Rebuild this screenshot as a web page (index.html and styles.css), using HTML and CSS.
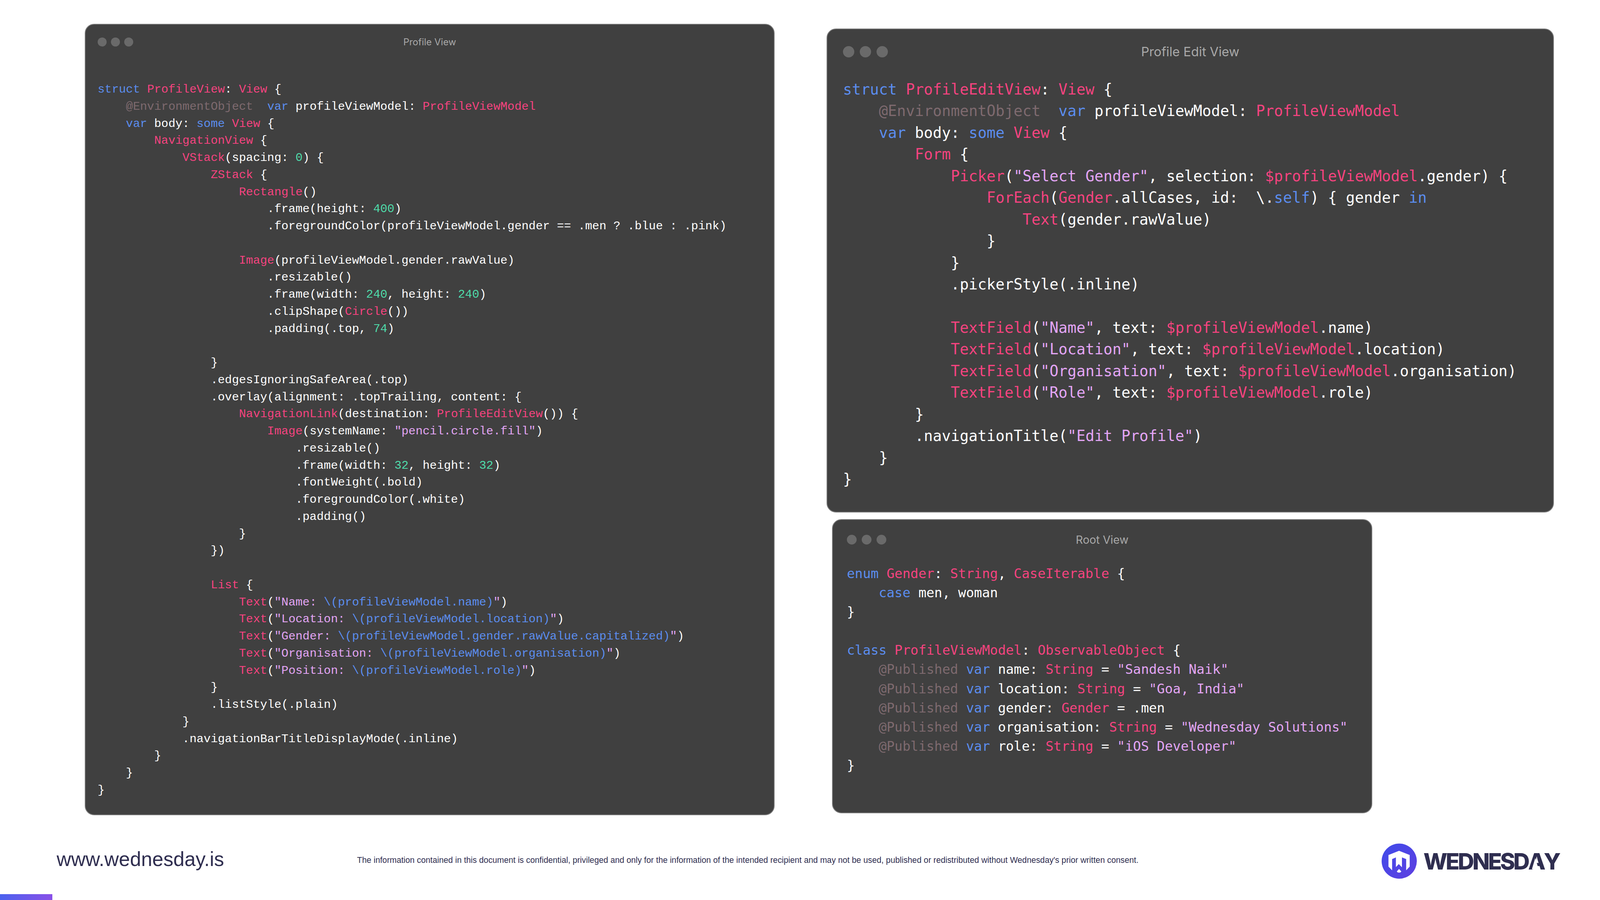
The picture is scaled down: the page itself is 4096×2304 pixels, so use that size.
FILE: index.html
```html
<!DOCTYPE html>
<html lang="en">
<head>
<meta charset="utf-8">
<title>SwiftUI profile code</title>
<link rel="stylesheet" href="styles.css">
</head>
<body>
<div class="slide">
  <main class="main">
    <section class="win win-profile">
      <header class="bar">
        <div class="dots"><i></i><i></i><i></i></div>
        <div class="title">Profile View</div>
      </header>
      <div class="code">
        <div class="ln"><span class="k">struct</span> <span class="t">ProfileView</span>: <span class="t">View</span> {</div>
        <div class="ln">    <span class="a">@EnvironmentObject</span>  <span class="k">var</span> profileViewModel: <span class="t">ProfileViewModel</span></div>
        <div class="ln">    <span class="k">var</span> body: <span class="k">some</span> <span class="t">View</span> {</div>
        <div class="ln">        <span class="t">NavigationView</span> {</div>
        <div class="ln">            <span class="t">VStack</span>(spacing: <span class="n">0</span>) {</div>
        <div class="ln">                <span class="t">ZStack</span> {</div>
        <div class="ln">                    <span class="t">Rectangle</span>()</div>
        <div class="ln">                        .frame(height: <span class="n">400</span>)</div>
        <div class="ln">                        .foregroundColor(profileViewModel.gender == .men ? .blue : .pink)</div>
        <div class="ln"> </div>
        <div class="ln">                    <span class="t">Image</span>(profileViewModel.gender.rawValue)</div>
        <div class="ln">                        .resizable()</div>
        <div class="ln">                        .frame(width: <span class="n">240</span>, height: <span class="n">240</span>)</div>
        <div class="ln">                        .clipShape(<span class="t">Circle</span>())</div>
        <div class="ln">                        .padding(.top, <span class="n">74</span>)</div>
        <div class="ln"> </div>
        <div class="ln">                }</div>
        <div class="ln">                .edgesIgnoringSafeArea(.top)</div>
        <div class="ln">                .overlay(alignment: .topTrailing, content: {</div>
        <div class="ln">                    <span class="t">NavigationLink</span>(destination: <span class="t">ProfileEditView</span>()) {</div>
        <div class="ln">                        <span class="t">Image</span>(systemName: <span class="s">"pencil.circle.fill"</span>)</div>
        <div class="ln">                            .resizable()</div>
        <div class="ln">                            .frame(width: <span class="n">32</span>, height: <span class="n">32</span>)</div>
        <div class="ln">                            .fontWeight(.bold)</div>
        <div class="ln">                            .foregroundColor(.white)</div>
        <div class="ln">                            .padding()</div>
        <div class="ln">                    }</div>
        <div class="ln">                })</div>
        <div class="ln"> </div>
        <div class="ln">                <span class="t">List</span> {</div>
        <div class="ln">                    <span class="t">Text</span>(<span class="s">"Name: </span><span class="k">\(profileViewModel.name)</span><span class="s">"</span>)</div>
        <div class="ln">                    <span class="t">Text</span>(<span class="s">"Location: </span><span class="k">\(profileViewModel.location)</span><span class="s">"</span>)</div>
        <div class="ln">                    <span class="t">Text</span>(<span class="s">"Gender: </span><span class="k">\(profileViewModel.gender.rawValue.capitalized)</span><span class="s">"</span>)</div>
        <div class="ln">                    <span class="t">Text</span>(<span class="s">"Organisation: </span><span class="k">\(profileViewModel.organisation)</span><span class="s">"</span>)</div>
        <div class="ln">                    <span class="t">Text</span>(<span class="s">"Position: </span><span class="k">\(profileViewModel.role)</span><span class="s">"</span>)</div>
        <div class="ln">                }</div>
        <div class="ln">                .listStyle(.plain)</div>
        <div class="ln">            }</div>
        <div class="ln">            .navigationBarTitleDisplayMode(.inline)</div>
        <div class="ln">        }</div>
        <div class="ln">    }</div>
        <div class="ln">}</div>
      </div>
    </section>
    <div class="side">
      <section class="win win-edit">
        <header class="bar">
          <div class="dots"><i></i><i></i><i></i></div>
          <div class="title">Profile Edit View</div>
        </header>
        <div class="code">
          <div class="ln"><span class="k">struct</span> <span class="t">ProfileEditView</span>: <span class="t">View</span> {</div>
          <div class="ln">    <span class="a">@EnvironmentObject</span>  <span class="k">var</span> profileViewModel: <span class="t">ProfileViewModel</span></div>
          <div class="ln">    <span class="k">var</span> body: <span class="k">some</span> <span class="t">View</span> {</div>
          <div class="ln">        <span class="t">Form</span> {</div>
          <div class="ln">            <span class="t">Picker</span>(<span class="s">"Select Gender"</span>, selection: <span class="t">$profileViewModel</span>.gender) {</div>
          <div class="ln">                <span class="t">ForEach</span>(<span class="t">Gender</span>.allCases, id:  \.<span class="k">self</span>) { gender <span class="k">in</span></div>
          <div class="ln">                    <span class="t">Text</span>(gender.rawValue)</div>
          <div class="ln">                }</div>
          <div class="ln">            }</div>
          <div class="ln">            .pickerStyle(.inline)</div>
          <div class="ln"> </div>
          <div class="ln">            <span class="t">TextField</span>(<span class="s">"Name"</span>, text: <span class="t">$profileViewModel</span>.name)</div>
          <div class="ln">            <span class="t">TextField</span>(<span class="s">"Location"</span>, text: <span class="t">$profileViewModel</span>.location)</div>
          <div class="ln">            <span class="t">TextField</span>(<span class="s">"Organisation"</span>, text: <span class="t">$profileViewModel</span>.organisation)</div>
          <div class="ln">            <span class="t">TextField</span>(<span class="s">"Role"</span>, text: <span class="t">$profileViewModel</span>.role)</div>
          <div class="ln">        }</div>
          <div class="ln">        .navigationTitle(<span class="s">"Edit Profile"</span>)</div>
          <div class="ln">    }</div>
          <div class="ln">}</div>
        </div>
      </section>
      <section class="win win-root">
        <header class="bar">
          <div class="dots"><i></i><i></i><i></i></div>
          <div class="title">Root View</div>
        </header>
        <div class="code">
          <div class="ln"><span class="k">enum</span> <span class="t">Gender</span>: <span class="t">String</span>, <span class="t">CaseIterable</span> {</div>
          <div class="ln">    <span class="k">case</span> men, woman</div>
          <div class="ln">}</div>
          <div class="ln"> </div>
          <div class="ln"><span class="k">class</span> <span class="t">ProfileViewModel</span>: <span class="t">ObservableObject</span> {</div>
          <div class="ln">    <span class="a">@Published</span> <span class="k">var</span> name: <span class="t">String</span> = <span class="s">"Sandesh Naik"</span></div>
          <div class="ln">    <span class="a">@Published</span> <span class="k">var</span> location: <span class="t">String</span> = <span class="s">"Goa, India"</span></div>
          <div class="ln">    <span class="a">@Published</span> <span class="k">var</span> gender: <span class="t">Gender</span> = .men</div>
          <div class="ln">    <span class="a">@Published</span> <span class="k">var</span> organisation: <span class="t">String</span> = <span class="s">"Wednesday Solutions"</span></div>
          <div class="ln">    <span class="a">@Published</span> <span class="k">var</span> role: <span class="t">String</span> = <span class="s">"iOS Developer"</span></div>
          <div class="ln">}</div>
        </div>
      </section>
    </div>
  </main>
  <footer class="footer">
    <div class="url">www.wednesday.is</div>
    <p class="legal">The information contained in this document is confidential, privileged and only for the information of the intended recipient and may not be used, published or redistributed without Wednesday's prior written consent.</p>
    <div class="logo">
      <svg class="mark" viewBox="0 0 90 90" aria-hidden="true">
        <defs>
          <linearGradient id="markFill" x1="0" y1="0" x2="1" y2="1">
            <stop offset="0" stop-color="#3f4bea"/>
            <stop offset="1" stop-color="#5f3fe0"/>
          </linearGradient>
        </defs>
        <circle cx="45" cy="45" r="45" fill="url(#markFill)"/>
        <path fill="#fff" d="M44.6 18.5 71.8 29.3V59L62.8 68.5V39.7L52 35.4V60.7L43.9 52.6 36.5 60.3V35.6L26.8 39.7V68.5L17.5 59V29.3Z"/>
        <path fill="#fff" d="M44.6 65 50.5 71.5 47.5 74.3H41.7L38.7 71.5Z"/>
      </svg>
      <span class="wordmark">WEDNESD<span class="open-a">A</span>Y</span>
    </div>
  </footer>
  <div class="accent"></div>
</div>
</body>
</html>
```
FILE: styles.css
```css
html, body {
  margin: 0;
  padding: 0;
  background: #fff;
}
.slide {
  width: 4096px;
  height: 2304px;
  overflow: hidden;
  display: flex;
  flex-direction: column;
}
.main {
  display: flex;
  align-items: flex-start;
  height: 2026px;
  padding: 61px 0 0 217px;
  flex: none;
}
.side {
  display: flex;
  flex-direction: column;
  gap: 17px;
  margin: 12px 0 0 133px;
}
.win {
  box-sizing: border-box;
  background: #404040;
  border: 2px solid #7b7b7b;
  border-radius: 24px;
  overflow: hidden;
  flex: none;
}
.bar {
  box-sizing: border-box;
  display: grid;
  grid-template-columns: 1fr auto 1fr;
  align-items: center;
}
.dots {
  display: flex;
}
.dots i {
  display: block;
  background: #6a6a6a;
  border-radius: 50%;
}
.title {
  font-family: Inter, "Liberation Sans", sans-serif;
  color: #a8a8a8;
  white-space: nowrap;
}
.code {
  font-family: "DejaVu Sans Mono", monospace;
  color: #fff;
}
.ln {
  white-space: pre;
}
.k { color: #5b8def; }
.t { color: #f5437f; }
.a { color: #7e6a6f; }
.s { color: #e3a5f5; }
.n { color: #4fdcaa; }

.win-profile {
  width: 1766px;
  height: 2026px;
}
.win-profile .bar { padding: 30px 31px 0; height: 54px; }
.win-profile .dots { gap: 11px; }
.win-profile .dots i { width: 23px; height: 23px; }
.win-profile .title { font-size: 24px; }
.win-profile .code {
  font-family: "Liberation Mono", monospace;
  font-size: 30.15px;
  line-height: 43.75px;
  padding: 91px 0 0 31px;
}

.win-edit {
  width: 1862px;
  height: 1239px;
}
.win-edit .bar { padding: 37px 40px 0; height: 67px; }
.win-edit .dots { gap: 14px; }
.win-edit .dots i { width: 29px; height: 29px; }
.win-edit .title { font-size: 32.7px; }
.win-edit .code {
  font-size: 38.2px;
  line-height: 55.45px;
  padding: 60px 0 0 40px;
}

.win-root {
  width: 1383px;
  height: 753px;
  margin-left: 14px;
}
.win-root .bar { padding: 33px 36px 0; height: 59px; }
.win-root .dots { gap: 13px; }
.win-root .dots i { width: 25px; height: 25px; }
.win-root .title { font-size: 28.4px; }
.win-root .code {
  font-size: 33.8px;
  line-height: 49.1px;
  padding: 54px 0 0 36px;
}

.footer {
  display: flex;
  align-items: center;
  height: 91px;
  margin-top: 72px;
  padding-left: 145px;
  color: #2f2e50;
  font-family: "Liberation Sans", sans-serif;
  flex: none;
}
.url {
  width: 769px;
  flex: none;
  font-size: 51.2px;
  margin-bottom: 10px;
}
.legal {
  width: 2623px;
  flex: none;
  margin: 0 0 6px;
  font-size: 21.22px;
  white-space: nowrap;
}
.logo {
  display: flex;
  align-items: center;
  gap: 17px;
}
.mark {
  width: 90px;
  height: 91px;
  display: block;
}
.wordmark {
  font-family: Inter, "Liberation Sans", sans-serif;
  font-weight: 800;
  font-size: 58px;
  letter-spacing: -4.4px;
  color: #2f2e50;
}
.open-a {
  position: relative;
  display: inline-block;
}
.open-a::after {
  content: "";
  position: absolute;
  left: 50%;
  bottom: 0.241em;
  width: 0.3em;
  height: 0.5em;
  margin-left: -0.18em;
  background: #fff;
  clip-path: polygon(50% 0, 100% 100%, 0 100%);
}
.accent {
  margin-top: auto;
  width: 134px;
  height: 15px;
  background: linear-gradient(100deg, #4a62ee, #8a50e8);
  flex: none;
}
```
